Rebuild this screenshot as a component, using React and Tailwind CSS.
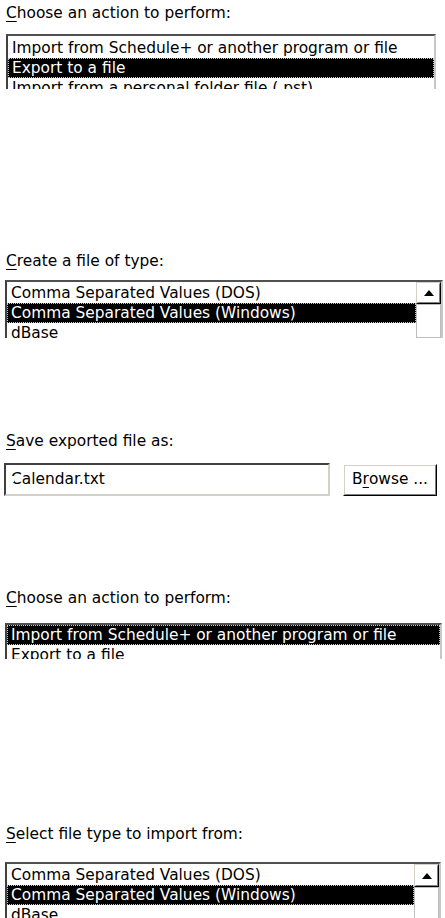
import React from 'react';

const font = { fontFamily: '"DejaVu Sans", Tahoma, Verdana, sans-serif' };

const Label = ({ access, rest, className = '' }) => (
  <div className={`ml-[6px] h-[20px] text-[15.4px] leading-[20px] text-black ${className}`}>
    <span className="underline underline-offset-[3px]">{access}</span>
    {rest}
  </div>
);

const ScrollBar = () => (
  <div className="flex w-[25px] shrink-0 flex-col">
    <div className="flex h-[25px] items-center justify-center border border-t-[#d4d0c8] border-l-[#d4d0c8] border-r-black border-b-black bg-white">
      <div className="flex h-full w-full items-center justify-center border border-t-white border-l-white border-r-[#808080] border-b-[#808080]">
        <svg width="10" height="6" viewBox="0 0 10 6">
          <path d="M5 0 L10 6 L0 6 Z" fill="#000" />
        </svg>
      </div>
    </div>
    <div className="h-[40px] border border-[#bdbdbd] bg-white" />
  </div>
);

const ListBox = ({ items, selected, width, height, top = 1, scroll = false, className = '' }) => (
  <div
    className={`overflow-hidden border-l-2 border-t-2 border-r-2 border-l-[#404040] border-t-[#505050] border-r-[#c8c8c8] ${className}`}
    style={{ width, height }}
  >
    <div className="flex h-full">
      <div className="flex-1 overflow-hidden" style={{ paddingTop: top }}>
        {items.map((item, i) => (
          <div
            key={item}
            className={
              i === selected
                ? 'h-[20px] whitespace-nowrap border border-dotted border-[#c8c8c8] bg-black pl-[3px] text-[15.4px] leading-[18px] text-white'
                : 'h-[20px] whitespace-nowrap border border-transparent pl-[3px] text-[15.4px] leading-[18px] text-black'
            }
          >
            {item}
          </div>
        ))}
      </div>
      {scroll && <ScrollBar />}
    </div>
  </div>
);

const actions = [
  'Import from Schedule+ or another program or file',
  'Export to a file',
  'Import from a personal folder file (.pst)',
];

const fileTypes = ['Comma Separated Values (DOS)', 'Comma Separated Values (Windows)', 'dBase'];

export default function App() {
  return (
    <div className="h-[918px] w-[445px] overflow-hidden bg-white" style={font}>
      <Label access="C" rest="hoose an action to perform:" className="pt-[3px] h-[23px]" />
      <ListBox items={actions} selected={1} width={430} height={55} top={2} className="ml-[6px] mt-[11px]" />

      <Label access="C" rest="reate a file of type:" className="mt-[162px]" />
      <ListBox items={fileTypes} selected={1} width={438} height={58} scroll className="ml-[5px] mt-[9px]" />

      <Label access="S" rest="ave exported file as:" className="mt-[93px]" />
      <div className="mt-[12px] flex items-start">
        <div className="ml-[4px] h-[33px] w-[326px] border-2 border-t-[#404040] border-l-[#404040] border-b-[#d4d0c8] border-r-[#d4d0c8] bg-white">
          <div className="pl-[5px] text-[15.4px] leading-[28px] text-black">
            <span className="relative inline-block">
              C
              <span className="absolute left-0 top-[11px] h-[6px] w-[3px] bg-white" />
            </span>
            alendar.txt
          </div>
        </div>
        <div className="ml-[13px] mt-[1px] h-[32px] w-[94px] border border-t-white border-l-white border-r-black border-b-black bg-white">
          <div className="flex h-full w-full items-center justify-center border border-t-[#d4d0c8] border-l-[#d4d0c8] border-r-[#808080] border-b-[#808080] text-[15.4px] text-black">
            B<span className="underline underline-offset-[3px]">r</span>owse ...
          </div>
        </div>
      </div>

      <Label access="C" rest="hoose an action to perform:" className="mt-[92px]" />
      <ListBox items={actions} selected={0} width={437} height={36} top={0} className="ml-[5px] mt-[15px]" />

      <Label access="S" rest="elect file type to import from:" className="mt-[165px]" />
      <ListBox items={fileTypes} selected={1} width={436} height={62} scroll className="ml-[5px] mt-[18px]" />
    </div>
  );
}
